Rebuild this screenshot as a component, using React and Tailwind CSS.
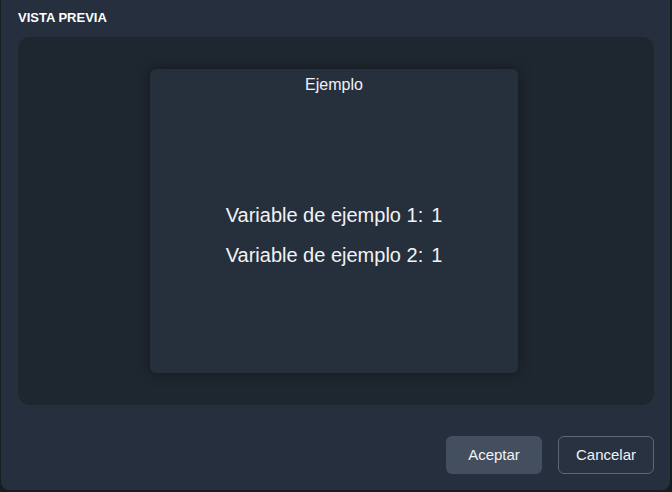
import React from "react";

const font = { fontFamily: '"Liberation Sans", Arial, sans-serif' };

const Variable = ({ label, value }) => (
  <div className="flex items-center gap-2 text-[20px] leading-[24px] text-[#f1f3f5]">
    <span>{label}</span>
    <span>{value}</span>
  </div>
);

export default function App() {
  return (
    <div className="w-[672px] h-[492px] bg-[#171c23] overflow-hidden" style={font}>
      <div className="ml-[1px] w-[669px] h-[490px] bg-[#262f3d] rounded-b-lg flex flex-col pl-[17px] pr-[16px] pb-4">
        <h2 className="pt-[9px] pb-[10px] text-[13px] leading-[18px] font-bold text-white">
          VISTA PREVIA
        </h2>

        <div className="bg-[#1e262f] rounded-xl py-8 pr-1 flex justify-center h-[368px]">
          <div className="w-[368px] bg-[#262f3c] rounded-md shadow-[0_0_14px_rgba(0,0,0,0.35)] flex flex-col">
            <div className="pt-[6px] h-[24px] text-center text-[16px] leading-[20px] text-[#f1f3f5]">
              Ejemplo
            </div>
            <div className="flex-1 pt-[4px] flex flex-col items-center justify-center gap-4">
              <Variable label="Variable de ejemplo 1:" value="1" />
              <Variable label="Variable de ejemplo 2:" value="1" />
            </div>
          </div>
        </div>

        <div className="mt-auto flex justify-end gap-4">
          <button
            type="button"
            className="w-[96px] h-[38px] rounded-md bg-[#434e5e] text-[15px] text-[#f1f3f5]"
          >
            Aceptar
          </button>
          <button
            type="button"
            className="w-[96px] h-[38px] rounded-md border border-[#5b6677] bg-[#283241] text-[15px] text-[#f1f3f5]"
          >
            Cancelar
          </button>
        </div>
      </div>
    </div>
  );
}
